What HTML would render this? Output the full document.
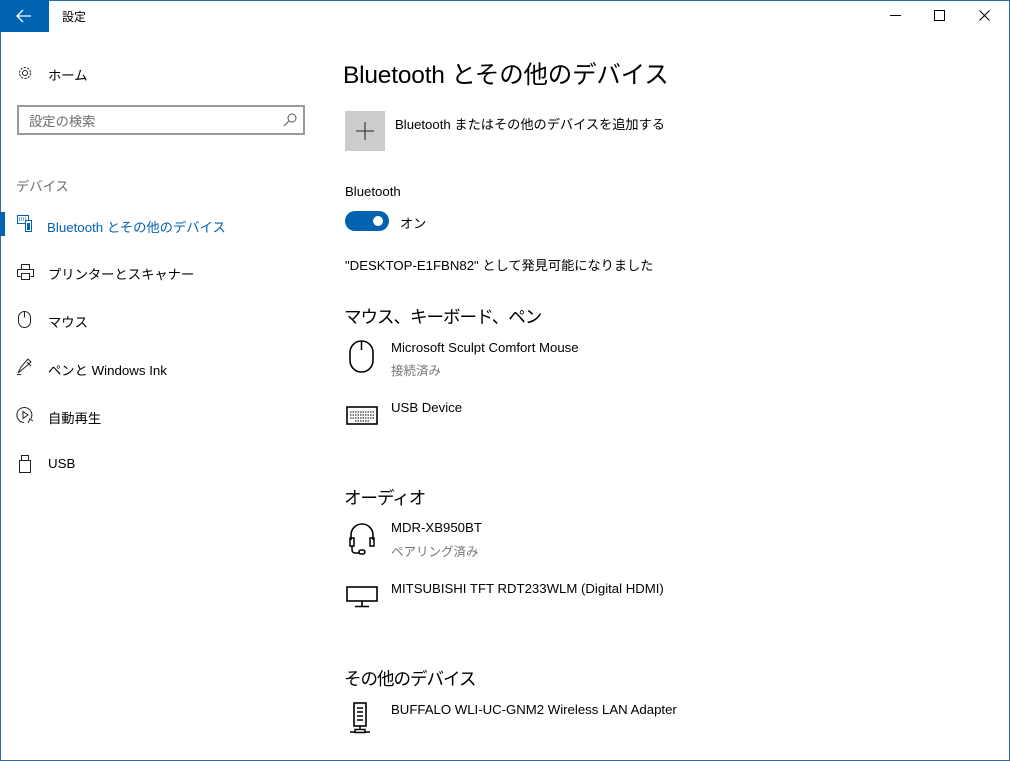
<!DOCTYPE html>
<html><head><meta charset="utf-8"><style>
*{margin:0;padding:0;box-sizing:border-box}
html,body{width:1010px;height:761px;overflow:hidden;background:#fff}
body{font-family:"Liberation Sans","Noto Sans CJK JP",sans-serif;color:#000;position:relative}
.frame{position:absolute;left:0;top:0;width:1010px;height:761px;border:1px solid #2a6cab;border-top:1px solid #2a6cab}
.a{position:absolute;white-space:nowrap}
.back{position:absolute;left:0;top:0;width:49px;height:32px;background:#0063b1}
.nav{font-size:13.3px}
.t{font-size:13.2px}
.s{font-size:12.5px;color:#767676}
.h{font-size:17.5px;letter-spacing:-1px}
svg{position:absolute}
</style></head><body>
<div class="frame"></div>
<div class="back"><svg style="left:16px;top:9px" width="16" height="14" viewBox="0 0 16 14"><path d="M1 7H15M7 1L1 7L7 13" stroke="#fff" stroke-width="1.3" fill="none"/></svg></div>
<div class="a" style="left:62px;top:8px;font-size:12px">設定</div>
<svg style="left:890px;top:15px" width="12" height="2"><rect width="11" height="1" fill="#000"/></svg>
<svg style="left:934px;top:10px" width="12" height="12"><rect x=".5" y=".5" width="10" height="10" fill="none" stroke="#000"/></svg>
<svg style="left:979px;top:10px" width="12" height="12"><path d="M.5 .5L10.5 10.5M10.5 .5L.5 10.5" stroke="#000"/></svg>

<svg style="left:17px;top:65px" width="16" height="16" viewBox="0 0 16 16"><circle cx="8" cy="8" r="2.5" fill="none" stroke="#222"/><circle cx="8" cy="8" r="5.5" fill="none" stroke="#222" stroke-dasharray="2.2 1.3"/></svg>
<div class="a nav" style="left:48px;top:65px">ホーム</div>
<div class="a" style="left:17px;top:105px;width:288px;height:30px;border:2px solid #999"></div>
<div class="a" style="left:29px;top:111px;font-size:13.3px;color:#6d6d6d">設定の検索</div>
<svg style="left:282px;top:112px" width="16" height="16"><circle cx="10" cy="6" r="4" fill="none" stroke="#555"/><path d="M7 9L2 14" stroke="#555"/></svg>
<div class="a" style="left:16px;top:176px;font-size:13.3px;color:#6d6d6d">デバイス</div>
<div class="a" style="left:0;top:212px;width:5px;height:24px;background:#0063b1"></div>
<svg style="left:17px;top:215px" width="18" height="18" viewBox="0 0 18 18"><rect x=".5" y=".5" width="11" height="8" fill="none" stroke="#0063b1"/><path d="M2 3h8M2 5h8" stroke="#0063b1" stroke-dasharray="1 1"/><rect x="8.5" y="5.5" width="6" height="11" fill="#fff" stroke="#0063b1"/><rect x="10" y="8" width="3" height="7" fill="#0063b1"/></svg>
<div class="a nav" style="left:47px;top:217px;color:#0063b1">Bluetooth とその他のデバイス</div>
<svg style="left:17px;top:264px" width="18" height="16"><path d="M4.5 5.5V.5h8v5M.5 5.5h16v7h-3M.5 5.5v7h3M4.5 9.5h8v6h-8z" fill="none" stroke="#222"/></svg>
<div class="a nav" style="left:48px;top:264px">プリンターとスキャナー</div>
<svg style="left:18px;top:311px" width="14" height="18"><path d="M6.5 .5v6" fill="none" stroke="#222"/><rect x=".5" y=".5" width="12" height="16" rx="6" fill="none" stroke="#222"/></svg>
<div class="a nav" style="left:48px;top:312px">マウス</div>
<svg style="left:16px;top:358px" width="18" height="18"><path d="M2 15l3-6 7-8 3 3-8 7zM1 17c2-1 3-1 4 0M11 4l4 4" fill="none" stroke="#222"/></svg>
<div class="a nav" style="left:48px;top:360px">ペンと Windows Ink</div>
<svg style="left:16px;top:406px" width="18" height="18"><path d="M8 16.5a7.5 7.5 0 1 1 7-4" fill="none" stroke="#222"/><path d="M7 5.5v7l5-3.5z" fill="none" stroke="#222"/><path d="M12 17l2-4 3 2" fill="none" stroke="#222"/></svg>
<div class="a nav" style="left:48px;top:408px">自動再生</div>
<svg style="left:19px;top:455px" width="12" height="18"><rect x="2.5" y=".5" width="7" height="5" fill="none" stroke="#222"/><rect x=".5" y="5.5" width="11" height="12" fill="none" stroke="#222"/></svg>
<div class="a nav" style="left:48px;top:456px">USB</div>

<div class="a" style="left:343px;top:56px;font-size:24.5px;letter-spacing:-.2px;color:#000">Bluetooth とその他のデバイス</div>
<div class="a" style="left:345px;top:111px;width:40px;height:40px;background:#cccccc"></div>
<svg style="left:356px;top:122px" width="18" height="18"><path d="M9 0v18M0 9h18" stroke="#444" stroke-width="1.3"/></svg>
<div class="a t" style="left:395px;top:114px">Bluetooth またはその他のデバイスを追加する</div>
<div class="a t" style="left:345px;top:184px">Bluetooth</div>
<div class="a" style="left:345px;top:211px;width:44px;height:20px;border-radius:10px;background:#0063b1"></div>
<div class="a" style="left:373px;top:216px;width:10px;height:10px;border-radius:5px;background:#fff"></div>
<div class="a t" style="left:400px;top:213px">オン</div>
<div class="a t" style="left:345px;top:255px">"DESKTOP-E1FBN82" として発見可能になりました</div>

<div class="a h" style="left:344px;top:304px">マウス、キーボード、ペン</div>
<svg style="left:349px;top:340px" width="26" height="34"><path d="M12.5 1v9" stroke="#000" stroke-width="1.5"/><rect x="1" y="1" width="23" height="31" rx="11.5" fill="none" stroke="#000" stroke-width="1.6"/></svg>
<div class="a t" style="left:391px;top:340px">Microsoft Sculpt Comfort Mouse</div>
<div class="a s" style="left:391px;top:360px">接続済み</div>
<svg style="left:346px;top:406px" width="32" height="20"><rect x="1" y="1" width="30" height="17" fill="none" stroke="#000" stroke-width="1.6"/><path d="M4 6h24M4 9h24M4 12h24M9 15h14" stroke="#000" stroke-dasharray="1.5 1"/></svg>
<div class="a t" style="left:391px;top:400px">USB Device</div>

<div class="a h" style="left:344px;top:485px">オーディオ</div>
<svg style="left:348px;top:522px" width="28" height="34"><path d="M3 18V13a11 11 0 0 1 22 0v5" fill="none" stroke="#000" stroke-width="1.6"/><rect x="2" y="16" width="4" height="8" fill="none" stroke="#000" stroke-width="1.5"/><rect x="22" y="16" width="4" height="8" fill="none" stroke="#000" stroke-width="1.5"/><path d="M4 24v4a3 3 0 0 0 3 3h4" fill="none" stroke="#000" stroke-width="1.5"/><rect x="11" y="28" width="6" height="4" rx="2" fill="none" stroke="#000" stroke-width="1.5"/></svg>
<div class="a t" style="left:391px;top:520px">MDR-XB950BT</div>
<div class="a s" style="left:391px;top:541px">ペアリング済み</div>
<svg style="left:346px;top:586px" width="32" height="22"><rect x="1" y="1" width="30" height="14" fill="none" stroke="#000" stroke-width="1.6"/><path d="M16 15v5M9 20.5h14" stroke="#000" stroke-width="1.6"/></svg>
<div class="a t" style="left:391px;top:581px">MITSUBISHI TFT RDT233WLM (Digital HDMI)</div>

<div class="a h" style="left:344px;top:666px">その他のデバイス</div>
<svg style="left:348px;top:702px" width="26" height="34"><rect x="6" y="1" width="12" height="23" fill="none" stroke="#000" stroke-width="1.6"/><path d="M9 6h6M9 10h6M9 14h6M9 18h6" stroke="#000" stroke-width="1.4"/><path d="M12 24v3M7 27.5h10v3H7zM2 30h5M17 30h5" fill="none" stroke="#000" stroke-width="1.4"/></svg>
<div class="a t" style="left:391px;top:702px">BUFFALO WLI-UC-GNM2 Wireless LAN Adapter</div>
</body></html>
